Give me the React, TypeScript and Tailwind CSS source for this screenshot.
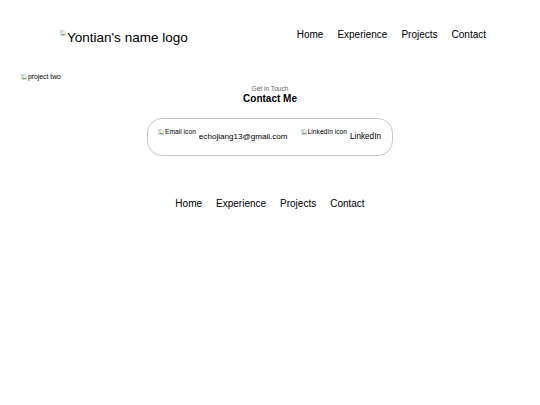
import type React from "react"

const navLinks = ["Home", "Experience", "Projects", "Contact"]

// little placeholder glyph shown where an image failed to load
const BrokenImg: React.FC<{ size?: number }> = ({ size = 6 }) => (
  <svg width={size} height={size} viewBox="0 0 16 16" className="shrink-0">
    <path d="M1.5 1.5h9l4 4v9h-13z" fill="#f4f4f4" stroke="#9a9a9a" />
    <path d="M3 13l3.5-4 2.5 2.5 2-2 2.5 3.5z" fill="#5aa35a" />
    <circle cx="5" cy="5" r="1.5" fill="#5b8fd6" />
  </svg>
)

const ImgAlt: React.FC<{ alt: string; className?: string; size?: number }> = ({ alt, className = "", size }) => (
  <span className={`inline-flex shrink-0 items-center gap-[1px] whitespace-nowrap ${className}`}>
    <BrokenImg size={size} />
    <span>{alt}</span>
  </span>
)

const Nav: React.FC<{ className?: string }> = ({ className = "" }) => (
  <nav className={`flex gap-[14px] text-[10px] leading-[12px] ${className}`}>
    {navLinks.map((l) => (
      <a key={l} href="#" className="text-black">
        {l}
      </a>
    ))}
  </nav>
)

export default function App() {
  return (
    <div className="min-h-[405px] w-full bg-white text-black font-['Liberation_Sans',Arial,sans-serif]">
      <header className="flex items-start justify-between pl-[60px] pr-[54px]">
        <ImgAlt alt="Yontian's name logo" size={6} className="mt-[30px] text-[13.5px] leading-[16px] items-start" />
        <Nav className="mt-[29px]" />
      </header>

      <div className="mt-[17px] pl-[21px]">
        <ImgAlt alt="project two" className="text-[6.8px] leading-[8px]" />
      </div>

      <section className="flex flex-col items-center">
        <p className="-mt-[2px] text-[6.6px] leading-[8px] text-[#666]">Get in Touch</p>
        <h2 className="text-[10px] leading-[12px] font-bold">Contact Me</h2>

        <div className="mt-[13px] flex h-[38px] w-[246px] items-end gap-[13px] whitespace-nowrap rounded-[15px] border border-[#c8c8c8] pl-[10px] pr-[10px] pb-[13px]">
          <div className="flex items-end">
            <ImgAlt alt="Email icon" className="mb-[6px] text-[6.7px] leading-[8px]" />
            <span className="ml-[3px] text-[8.1px] leading-[10px]">echojiang13@gmail.com</span>
          </div>
          <div className="flex items-end">
            <ImgAlt alt="LinkedIn icon" className="mb-[6px] text-[6.7px] leading-[8px]" />
            <span className="ml-[3px] text-[8.2px] leading-[10px]">LinkedIn</span>
          </div>
        </div>

        <Nav className="mt-[42px] gap-[13px]" />
      </section>
    </div>
  )
}
